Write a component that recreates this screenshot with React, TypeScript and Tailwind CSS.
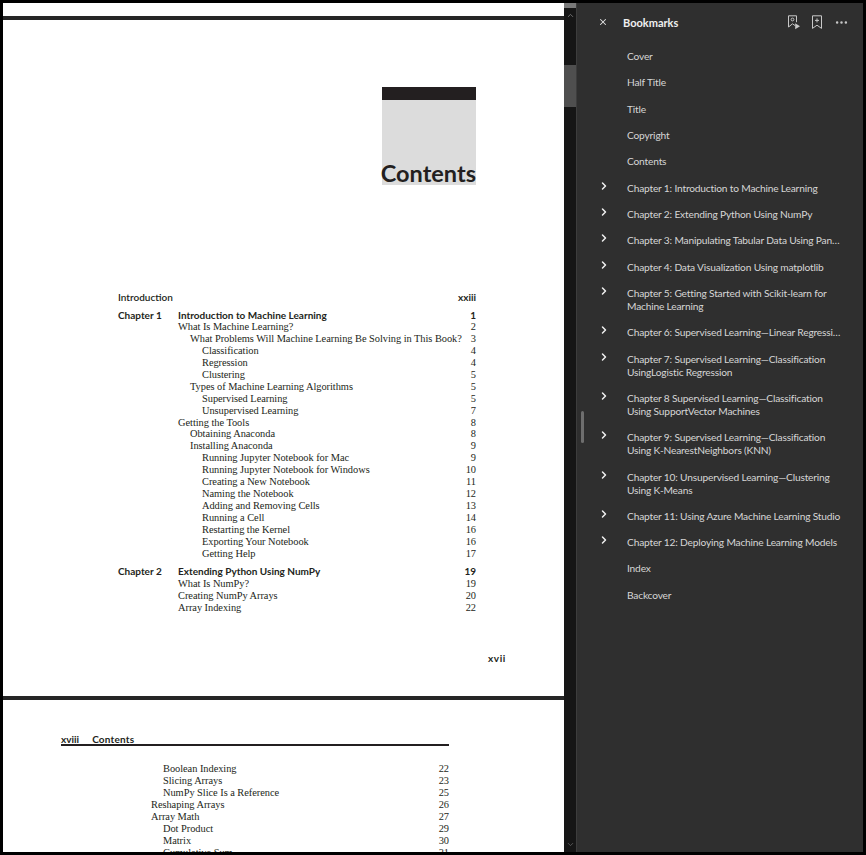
import { ChevronDown, ChevronRight, ChevronUp, MoreHorizontal, X } from 'lucide-react';

type TocRow = { level: number; text: string; page: string };

const chapterOne: TocRow[] = [
  { level: 0, text: 'What Is Machine Learning?', page: '2' },
  { level: 1, text: 'What Problems Will Machine Learning Be Solving in This Book?', page: '3' },
  { level: 2, text: 'Classification', page: '4' },
  { level: 2, text: 'Regression', page: '4' },
  { level: 2, text: 'Clustering', page: '5' },
  { level: 1, text: 'Types of Machine Learning Algorithms', page: '5' },
  { level: 2, text: 'Supervised Learning', page: '5' },
  { level: 2, text: 'Unsupervised Learning', page: '7' },
  { level: 0, text: 'Getting the Tools', page: '8' },
  { level: 1, text: 'Obtaining Anaconda', page: '8' },
  { level: 1, text: 'Installing Anaconda', page: '9' },
  { level: 2, text: 'Running Jupyter Notebook for Mac', page: '9' },
  { level: 2, text: 'Running Jupyter Notebook for Windows', page: '10' },
  { level: 2, text: 'Creating a New Notebook', page: '11' },
  { level: 2, text: 'Naming the Notebook', page: '12' },
  { level: 2, text: 'Adding and Removing Cells', page: '13' },
  { level: 2, text: 'Running a Cell', page: '14' },
  { level: 2, text: 'Restarting the Kernel', page: '16' },
  { level: 2, text: 'Exporting Your Notebook', page: '16' },
  { level: 2, text: 'Getting Help', page: '17' },
];

const chapterTwo: TocRow[] = [
  { level: 0, text: 'What Is NumPy?', page: '19' },
  { level: 0, text: 'Creating NumPy Arrays', page: '20' },
  { level: 0, text: 'Array Indexing', page: '22' },
];

const nextPage: TocRow[] = [
  { level: 1, text: 'Boolean Indexing', page: '22' },
  { level: 1, text: 'Slicing Arrays', page: '23' },
  { level: 1, text: 'NumPy Slice Is a Reference', page: '25' },
  { level: 0, text: 'Reshaping Arrays', page: '26' },
  { level: 0, text: 'Array Math', page: '27' },
  { level: 1, text: 'Dot Product', page: '29' },
  { level: 1, text: 'Matrix', page: '30' },
  { level: 1, text: 'Cumulative Sum', page: '31' },
];

const bookmarks: { title: string; nested?: boolean; truncate?: boolean }[] = [
  { title: 'Cover' },
  { title: 'Half Title' },
  { title: 'Title' },
  { title: 'Copyright' },
  { title: 'Contents' },
  { title: 'Chapter 1: Introduction to Machine Learning', nested: true },
  { title: 'Chapter 2: Extending Python Using NumPy', nested: true },
  { title: 'Chapter 3: Manipulating Tabular Data Using Pandas', nested: true, truncate: true },
  { title: 'Chapter 4: Data Visualization Using matplotlib', nested: true },
  { title: 'Chapter 5: Getting Started with Scikit-learn for Machine Learning', nested: true },
  { title: 'Chapter 6: Supervised Learning—Linear Regression', nested: true, truncate: true },
  { title: 'Chapter 7: Supervised Learning—Classification UsingLogistic Regression', nested: true },
  { title: 'Chapter 8 Supervised Learning—Classification Using SupportVector Machines', nested: true },
  { title: 'Chapter 9: Supervised Learning—Classification Using K-NearestNeighbors (KNN)', nested: true },
  { title: 'Chapter 10: Unsupervised Learning—Clustering Using K-Means', nested: true },
  { title: 'Chapter 11: Using Azure Machine Learning Studio', nested: true },
  { title: 'Chapter 12: Deploying Machine Learning Models', nested: true },
  { title: 'Index' },
  { title: 'Backcover' },
];

const serif = "font-['Liberation_Serif',serif] text-[10.4px] tracking-[-0.04px] leading-[11.95px] text-[#231f20]";
const sans = "font-['Lato',sans-serif] text-[10px] font-bold text-[#231f20]";

function Rows({ rows, steps }: { rows: TocRow[]; steps: string[] }) {
  return (
    <div className={serif}>
      {rows.map((row) => (
        <div key={row.text} className="flex h-[11.95px] justify-between whitespace-nowrap">
          <span className={steps[row.level]}>{row.text}</span>
          <span>{row.page}</span>
        </div>
      ))}
    </div>
  );
}

function ChapterHead({ label, title, page }: { label: string; title: string; page: string }) {
  return (
    <div className={`${sans} flex h-3 items-center leading-3`}>
      <span className="w-[60px]">{label}</span>
      <span className="flex-1">{title}</span>
      <span>{page}</span>
    </div>
  );
}

function PageOne() {
  const steps = ['pl-0', 'pl-3', 'pl-6'];
  return (
    <div className="h-[676px] shrink-0 bg-white pt-[67px]">
      <div className="ml-[379px] w-[94px]">
        <div className="h-[13px] bg-[#231f20]" />
        <div className="flex h-[85px] items-end justify-end bg-[#dcdcdc]">
          <span className="-mb-[3px] whitespace-nowrap font-['Lato',sans-serif] text-[23.5px] leading-[30px] font-bold text-[#231f20]">
            Contents
          </span>
        </div>
      </div>
      <div className="mt-[106px] ml-[115px] w-[358px]">
        <div className={`${sans} mb-[6px] flex h-3 justify-between leading-3`}>
          <span className="font-semibold">Introduction</span>
          <span>xxiii</span>
        </div>
        <ChapterHead label="Chapter 1" title="Introduction to Machine Learning" page="1" />
        <div className="ml-[60px]">
          <Rows rows={chapterOne} steps={steps} />
        </div>
        <div className="mt-[5px] mb-[1px]">
          <ChapterHead label="Chapter 2" title="Extending Python Using NumPy" page="19" />
        </div>
        <div className="ml-[60px]">
          <Rows rows={chapterTwo} steps={steps} />
        </div>
      </div>
      <div className={`${sans} mt-[38px] mr-[58px] text-right leading-3 tracking-[0.6px]`}>xvii</div>
    </div>
  );
}

function PageTwo() {
  return (
    <div className="h-[152px] shrink-0 overflow-hidden bg-white pt-[33px]">
      <div className="ml-[58px] w-[388px]">
        <div className={`${sans} flex h-[11px] gap-[13px] leading-3`}>
          <span>xviii</span>
          <span className="tracking-[0.2px]">Contents</span>
        </div>
        <div className="h-[2px] bg-[#231f20]" />
        <div className="mt-[17px] ml-[90px]">
          <Rows rows={nextPage} steps={['pl-0', 'pl-3']} />
        </div>
      </div>
    </div>
  );
}

function ExportBookmarkIcon() {
  return (
    <svg width="14" height="15" viewBox="0 0 14 15" fill="none" stroke="#c8c8c8" strokeWidth="1">
      <path d="M8 10.5 5.5 8.8 1.5 12V.8h8v6.4" />
      <circle cx="5.5" cy="4.5" r="1.4" />
      <path d="M8.2 8.2v6l4.8-3z" fill="#c8c8c8" stroke="none" />
    </svg>
  );
}

function AddBookmarkIcon() {
  return (
    <svg width="12" height="15" viewBox="0 0 12 15" fill="none" stroke="#c8c8c8" strokeWidth="1">
      <path d="M1.5.8h9v12.6L6 10.2 1.5 13.4z" />
      <path d="M6 3.4v4M4 5.4h4" />
    </svg>
  );
}

function Scrollbar() {
  return (
    <div className="flex w-[13px] shrink-0 flex-col border-r border-[#3d3d3d] bg-[#161616]">
      <div className="h-[5px] shrink-0 bg-[#7a7a7a]" />
      <div className="flex h-[15px] shrink-0 items-center justify-center">
        <ChevronUp size={9} strokeWidth={2} color="#8a8a8a" />
      </div>
      <div className="mt-[42px] h-[42px] shrink-0 bg-[#4f4f4f]" />
      <div className="mt-auto flex h-[15px] shrink-0 items-center justify-center">
        <ChevronDown size={9} strokeWidth={2} color="#6a6a6a" />
      </div>
    </div>
  );
}

function BookmarkPanel() {
  return (
    <div className="relative w-[286px] min-w-0 shrink-0 bg-[#2f2f2f] font-['Lato',sans-serif] text-[10.2px] leading-[13px] tracking-[-0.18px] text-[#d6d6d6]">
      <div className="absolute top-[408px] left-[4px] h-[32px] w-[3px] rounded-sm bg-[#6e6e6e]" />
      <div className="flex h-[38px] items-center pl-[21px]">
        <X size={10} strokeWidth={2.5} color="#e4e4e4" />
        <span className="ml-[15px] flex-1 text-[11px] font-bold tracking-normal text-[#f0f0f0]">Bookmarks</span>
        <div className="mr-[14px] flex items-center gap-[10px]">
          <ExportBookmarkIcon />
          <AddBookmarkIcon />
          <MoreHorizontal size={15} strokeWidth={2} color="#c8c8c8" className="ml-[1px]" />
        </div>
      </div>
      <div className="pt-[2.5px]">
        {bookmarks.map((item) => (
          <div key={item.title} className="flex py-[6.66px] pr-[20px]">
            <div className="w-[50px] shrink-0 pl-[21px]">
              {item.nested && <ChevronRight size={12} strokeWidth={3} color="#f0f0f0" className="-mt-[2px]" />}
            </div>
            <span className={item.truncate ? 'min-w-0 flex-1 truncate' : 'min-w-0 flex-1'}>{item.title}</span>
          </div>
        ))}
      </div>
    </div>
  );
}

export default function App() {
  return (
    <div className="flex h-[855px] w-[866px] overflow-hidden border-[3px] border-black bg-black">
      <div className="flex w-[561px] shrink-0 flex-col overflow-hidden">
        <div className="h-[13px] shrink-0 bg-white" />
        <div className="h-[4px] shrink-0 bg-[#262626]" />
        <PageOne />
        <div className="h-[4px] shrink-0 bg-[#262626]" />
        <PageTwo />
      </div>
      <Scrollbar />
      <BookmarkPanel />
    </div>
  );
}
